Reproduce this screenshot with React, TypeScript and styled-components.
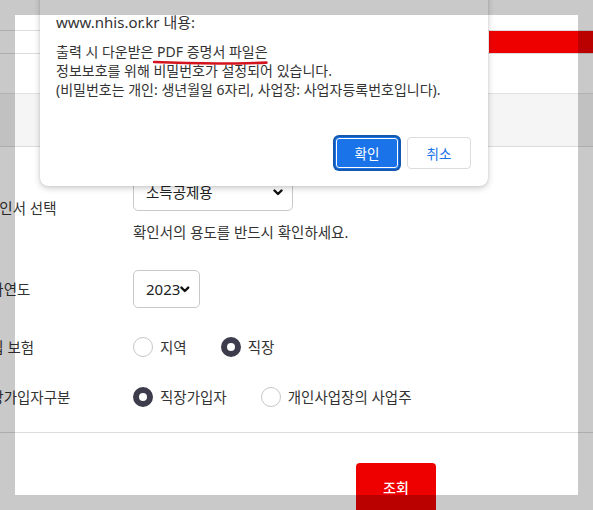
import React from 'react';
import styled, { createGlobalStyle } from 'styled-components';

const FONT = '"Noto Sans", "Noto Sans CJK KR", sans-serif';

const GlobalStyle = createGlobalStyle`
  html, body {
    margin: 0;
    padding: 0;
    background: #fff;
    overflow: hidden;
  }
  body {
    font-family: ${FONT};
    color: #333;
  }
`;

const Page = styled.div`
  position: relative;
  width: 593px;
  height: 510px;
  overflow: hidden;
`;

const TabBar = styled.div`
  display: flex;
  justify-content: flex-end;
  margin-top: 30px;
  height: 22px;
  border-top: 1px solid #dcdcdc;
  border-bottom: 1px solid #dcdcdc;
`;

const ActiveTab = styled.div`
  width: 104px;
  background: #ee0000;
`;

const TitleBand = styled.div`
  display: flex;
  align-items: center;
  margin-top: 39px;
  height: 52px;
  background: #f5f5f5;
  border-top: 1px solid #e2e2e2;
  border-bottom: 1px solid #dcdcdc;
`;

const Title = styled.h2`
  margin: 0 0 0 -178px;
  font-size: 22px;
  font-weight: 700;
  color: #222;
  white-space: nowrap;
`;

const Form = styled.div`
  display: flex;
  flex-direction: column;
  gap: 28px;
  margin-left: -23px;
  padding: 26px 0 24px;
`;

const Row = styled.div`
  display: grid;
  grid-template-columns: 156px auto;
  align-items: center;
`;

const Label = styled.div<{ $indent?: number }>`
  padding-left: ${(p) => p.$indent ?? 0}px;
  font-size: 14.5px;
  line-height: 22px;
  color: #333;
  white-space: nowrap;
`;

const Field = styled.div`
  display: flex;
  flex-direction: column;
  align-items: flex-start;
  gap: 11px;
`;

const SelectBox = styled.div<{ $width: number }>`
  display: flex;
  align-items: center;
  justify-content: space-between;
  box-sizing: border-box;
  width: ${(p) => p.$width}px;
  height: 38px;
  padding: 0 9px 0 12px;
  border: 1px solid #c9c9c9;
  border-radius: 5px;
  background: #fff;
  color: #222;
`;

const SelectText = styled.span<{ $latin?: boolean }>`
  font-size: ${(p) => (p.$latin ? 15 : 14.5)}px;
  line-height: 20px;
`;

const Help = styled.div`
  font-size: 14.5px;
  line-height: 20px;
  color: #333;
`;

const RadioGroup = styled.div`
  display: flex;
  align-items: center;
  gap: 34px;
`;

const RadioItem = styled.label`
  display: flex;
  align-items: center;
  gap: 7px;
  font-size: 14.5px;
  line-height: 22px;
  color: #333;
`;

const RadioDot = styled.span<{ $checked?: boolean }>`
  width: 20px;
  height: 20px;
  box-sizing: border-box;
  border-radius: 50%;
  background: #fff;
  border: ${(p) => (p.$checked ? '6px solid #3d3c4c' : '1px solid #c6c6c6')};
`;

const Divider = styled.hr`
  margin: 0;
  border: none;
  border-top: 1px solid #dcdcdc;
`;

const Actions = styled.div`
  display: flex;
  padding: 30px 0 0 356px;
`;

const SubmitButton = styled.button`
  width: 80px;
  height: 48px;
  border: none;
  border-radius: 4px 4px 0 0;
  background: #ee0000;
  color: #fff;
  font-family: ${FONT};
  font-size: 14px;
  font-weight: 500;
`;

/* browser confirm box */
const Dialog = styled.div`
  position: absolute;
  left: 40px;
  top: -14px;
  width: 448px;
  height: 200px;
  box-sizing: border-box;
  display: flex;
  flex-direction: column;
  padding: 26px 17px 17px 16px;
  background: #fff;
  border-radius: 8px;
  box-shadow: 0 2px 6px rgba(0, 0, 0, 0.22), 0 0 1px rgba(0, 0, 0, 0.2);
`;

const DialogTitle = styled.div`
  font-size: 15px;
  line-height: 20px;
  color: #333;
`;

const Message = styled.div`
  margin-top: 10px;
  font-size: 14px;
  line-height: 19px;
  color: #333;
`;

const Marked = styled.span`
  position: relative;
`;

const MarkerLine = styled.svg`
  position: absolute;
  left: -4px;
  bottom: -5px;
  width: calc(100% + 4px);
  height: 6px;
  overflow: visible;
`;

const ButtonRow = styled.div`
  display: flex;
  justify-content: flex-end;
  gap: 8px;
  margin-top: auto;
`;

const DialogButton = styled.button<{ $primary?: boolean }>`
  width: 64px;
  height: 32px;
  border-radius: 4px;
  font-family: ${FONT};
  font-size: 13.5px;
  cursor: pointer;
  ${(p) =>
    p.$primary
      ? `
    background: #1a73e8;
    color: #fff;
    border: 1px solid #1a73e8;
    box-shadow: 0 0 0 1px #fff inset, 0 0 0 2px #1558b0;
  `
      : `
    background: #fff;
    color: #1a73e8;
    border: 1px solid #dadce0;
  `}
`;

const Shade = styled.div`
  position: absolute;
  inset: 0;
  border: 15px solid rgba(0, 0, 0, 0.21);
  pointer-events: none;
`;

function Chevron() {
  return (
    <svg width="10" height="7" viewBox="0 0 10 7">
      <polyline
        points="1.5,1.5 5,5 8.5,1.5"
        fill="none"
        stroke="#111"
        strokeWidth="2.4"
        strokeLinecap="round"
        strokeLinejoin="round"
      />
    </svg>
  );
}

function Radio({ label, checked }: { label: string; checked?: boolean }) {
  return (
    <RadioItem>
      <RadioDot $checked={checked} />
      {label}
    </RadioItem>
  );
}

export default function App() {
  return (
    <>
      <GlobalStyle />
      <Page>
        <TabBar>
          <ActiveTab />
        </TabBar>
        <TitleBand>
          <Title>보험료 납부확인서</Title>
        </TitleBand>

        <Form>
          <Row>
            <Label $indent={9}>확인서 선택</Label>
            <Field>
              <SelectBox $width={160}>
                <SelectText>소득공제용</SelectText>
                <Chevron />
              </SelectBox>
              <Help>확인서의 용도를 반드시 확인하세요.</Help>
            </Field>
          </Row>
          <Row>
            <Label>부과연도</Label>
            <Field>
              <SelectBox $width={67}>
                <SelectText $latin>2023</SelectText>
                <Chevron />
              </SelectBox>
            </Field>
          </Row>
          <Row>
            <Label>가입 보험</Label>
            <RadioGroup>
              <Radio label="지역" />
              <Radio label="직장" checked />
            </RadioGroup>
          </Row>
          <Row>
            <Label>직장가입자구분</Label>
            <RadioGroup>
              <Radio label="직장가입자" checked />
              <Radio label="개인사업장의 사업주" />
            </RadioGroup>
          </Row>
        </Form>

        <Divider />
        <Actions>
          <SubmitButton>조회</SubmitButton>
        </Actions>

        <Dialog>
          <DialogTitle>www.nhis.or.kr 내용:</DialogTitle>
          <Message>
            출력 시 다운받은{' '}
            <Marked>
              PDF 증명서 파일은
              <MarkerLine viewBox="0 0 100 6" preserveAspectRatio="none">
                <path
                  d="M1 2 Q 50 4.6 99 2.6"
                  fill="none"
                  stroke="#d4141c"
                  strokeWidth="2.6"
                  strokeLinecap="round"
                  vectorEffect="non-scaling-stroke"
                />
              </MarkerLine>
            </Marked>
            <br />
            정보보호를 위해 비밀번호가 설정되어 있습니다.
            <br />
            (비밀번호는 개인: 생년월일 6자리, 사업장: 사업자등록번호입니다).
          </Message>
          <ButtonRow>
            <DialogButton $primary>확인</DialogButton>
            <DialogButton>취소</DialogButton>
          </ButtonRow>
        </Dialog>

        <Shade />
      </Page>
    </>
  );
}
